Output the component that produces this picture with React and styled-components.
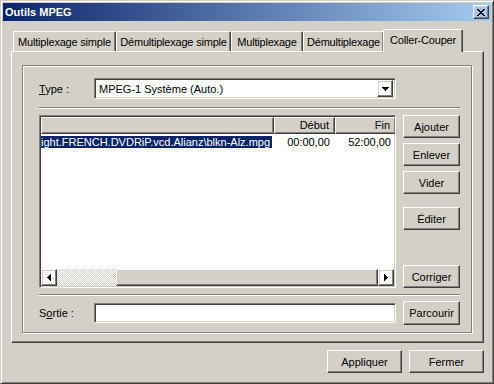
import React from 'react';
import styled, { createGlobalStyle, css } from 'styled-components';

const face = '#d4d0c8';

const Global = createGlobalStyle`
  html, body { margin: 0; padding: 0; background: ${face}; }
  body { font-family: "Liberation Sans", Arial, sans-serif; font-size: 11px; color: #000; }
  * { box-sizing: border-box; }
`;

const raised = css`
  border: 1px solid;
  border-color: #fff #404040 #404040 #fff;
  box-shadow: inset -1px -1px #808080, inset 1px 1px ${face};
`;

const sunken = css`
  border: 1px solid;
  border-color: #808080 #fff #fff #808080;
  box-shadow: inset 1px 1px #404040, inset -1px -1px ${face};
`;

const Window = styled.div`
  width: 494px;
  height: 384px;
  background: ${face};
  border: 1px solid;
  border-color: ${face} #404040 #404040 ${face};
  box-shadow: inset 1px 1px #fff, inset -1px -1px #808080;
  padding: 2px;
  display: flex;
  flex-direction: column;
`;

const TitleBar = styled.div`
  height: 18px;
  background: linear-gradient(to right, #0a246a, #a6caf0);
  display: flex;
  align-items: center;
  padding: 0 2px 0 2px;
  color: #fff;
  font-weight: bold;
  font-size: 11px;
`;

const CloseBtn = styled.div`
  ${raised};
  width: 16px;
  height: 14px;
  margin-left: auto;
  display: flex;
  align-items: center;
  justify-content: center;
`;

const Body = styled.div`
  padding: 8px 7px 0 8px;
  display: flex;
  flex-direction: column;
`;

const TabRow = styled.div`
  display: flex;
  align-items: flex-end;
  height: 22px;
  padding-left: 2px;
`;

const Tab = styled.div`
  width: ${p => p.$w + (p.$active ? 4 : 0)}px;
  height: ${p => (p.$active ? 23 : 20)}px;
  padding-bottom: ${p => (p.$active ? 2 : 0)}px;
  margin: ${p => (p.$active ? '0 -2px -1px -1px' : '0')};
  position: ${p => (p.$active ? 'relative' : 'static')};
  z-index: ${p => (p.$active ? 2 : 0)};
  background: ${face};
  border-left: 1px solid #fff;
  border-top: 1px solid #fff;
  border-right: 1px solid #404040;
  border-radius: 2px 2px 0 0;
  box-shadow: inset -1px 0 #808080;
  display: flex;
  align-items: center;
  justify-content: center;
  white-space: nowrap;
  letter-spacing: -0.2px;
  flex-shrink: 0;
`;

const Panel = styled.div`
  height: 292px;
  ${raised};
  padding: 13px 11px 9px 10px;
  display: flex;
`;

const Frame = styled.div`
  flex: 1;
  border: 1px solid #808080;
  box-shadow: inset 1px 1px #fff, 1px 1px #fff;
  padding: 12px 11px 0 16px;
  display: flex;
  flex-direction: column;
`;

const FieldRow = styled.div`
  display: flex;
  align-items: center;
  height: ${p => p.$h || 21}px;
  margin-top: ${p => p.$mt || 0}px;
`;

const Label = styled.div`
  width: 55px;
`;

const Combo = styled.div`
  ${sunken};
  width: 302px;
  height: 21px;
  background: #fff;
  display: flex;
  align-items: center;
  padding: 2px 2px 2px 4px;
`;

const ComboText = styled.div`
  flex: 1;
`;

const DropBtn = styled.div`
  ${raised};
  width: 16px;
  height: 17px;
  display: flex;
  align-items: center;
  justify-content: center;
`;

const Sep = styled.div`
  height: 2px;
  border-top: 1px solid #808080;
  border-bottom: 1px solid #fff;
  margin-top: ${p => p.$mt}px;
`;

const Main = styled.div`
  display: flex;
  height: 173px;
  margin-top: 6px;
`;

const ListBox = styled.div`
  ${sunken};
  width: 357px;
  background: #fff;
  display: flex;
  flex-direction: column;
  overflow: hidden;
  padding: 1px;
`;

const Header = styled.div`
  display: flex;
  height: 17px;
  flex-shrink: 0;
`;

const HeadCell = styled.div`
  width: ${p => p.$w}px;
  flex-shrink: 0;
  background: ${face};
  border: 1px solid;
  border-color: #fff #404040 #404040 #fff;
  box-shadow: inset -1px -1px #808080;
  text-align: right;
  padding: 1px 5px 0 0;
  line-height: 13px;
`;

const Rows = styled.div`
  flex: 1;
  padding-top: 1px;
`;

const Row = styled.div`
  display: flex;
  height: 14px;
  line-height: 14px;
`;

const Cell = styled.div`
  width: ${p => p.$w}px;
  flex-shrink: 0;
  text-align: ${p => (p.$right ? 'right' : 'left')};
  padding-right: ${p => (p.$right ? 5 : 0)}px;
  white-space: nowrap;
  overflow: hidden;
`;

const Selected = styled.span`
  background: #0a246a;
  color: #fff;
  padding-right: 2px;
`;

const HScroll = styled.div`
  display: flex;
  height: 17px;
  flex-shrink: 0;
`;

const ScrollBtn = styled.div`
  ${raised};
  width: 16px;
  display: flex;
  align-items: center;
  justify-content: center;
`;

const Track = styled.div`
  width: ${p => p.$w}px;
  background: repeating-conic-gradient(${face} 0% 25%, #fff 0% 50%) 0 0 / 2px 2px;
`;

const Thumb = styled.div`
  ${raised};
  flex: 1;
  background: ${face};
`;

const SideCol = styled.div`
  display: flex;
  flex-direction: column;
  width: 57px;
  margin-left: 7px;
`;

const Button = styled.div`
  ${raised};
  background: ${face};
  width: ${p => p.$w || 57}px;
  height: ${p => p.$h || 23}px;
  margin-top: ${p => (p.$auto ? 'auto' : `${p.$mt || 0}px`)};
  margin-left: ${p => p.$ml || 0}px;
  display: flex;
  align-items: center;
  justify-content: center;
  flex-shrink: 0;
`;

const Input = styled.div`
  ${sunken};
  width: 302px;
  height: 20px;
  background: #fff;
`;

const Footer = styled.div`
  display: flex;
  justify-content: flex-end;
  gap: 7px;
  margin-top: 7px;
`;

const Arrow = ({ dir }) => {
  const pts = {
    down: '0,0 7,0 7,1 6,1 6,2 5,2 5,3 4,3 4,4 3,4 3,3 2,3 2,2 1,2 1,1 0,1',
    left: '4,0 4,7 3,7 3,6 2,6 2,5 1,5 1,4 0,4 0,3 1,3 1,2 2,2 2,1 3,1 3,0',
    right: '0,0 0,7 1,7 1,6 2,6 2,5 3,5 3,4 4,4 4,3 3,3 3,2 2,2 2,1 1,1 1,0',
  }[dir];
  const w = dir === 'down' ? 7 : 4;
  const h = dir === 'down' ? 4 : 7;
  return (
    <svg width={w} height={h} shapeRendering="crispEdges">
      <polygon points={pts} fill="#000" />
    </svg>
  );
};

const CloseGlyph = () => {
  const rows = ['XX....XX', '.XX..XX.', '..XXXX..', '...XX...', '..XXXX..', '.XX..XX.', 'XX....XX'];
  return (
    <svg width="8" height="7" shapeRendering="crispEdges">
      {rows.map((r, y) =>
        r.split('').map((c, x) => (c === 'X' ? <rect key={`${x}-${y}`} x={x} y={y} width="1" height="1" fill="#000" /> : null))
      )}
    </svg>
  );
};

const tabs = [
  ['Multiplexage simple', 103],
  ['Démultiplexage simple', 115],
  ['Multiplexage', 72],
  ['Démultiplexage', 81],
  ['Coller-Couper', 76],
];

export default function App() {
  return (
    <>
      <Global />
      <Window>
        <TitleBar>
          Outils MPEG
          <CloseBtn><CloseGlyph /></CloseBtn>
        </TitleBar>
        <Body>
          <TabRow>
            {tabs.map(([t, w], i) => (
              <Tab key={t} $w={w} $active={i === 4}>{t}</Tab>
            ))}
          </TabRow>
          <Panel>
            <Frame>
              <FieldRow>
                <Label><u>T</u>ype :</Label>
                <Combo>
                  <ComboText>MPEG-1 Système (Auto.)</ComboText>
                  <DropBtn><Arrow dir="down" /></DropBtn>
                </Combo>
              </FieldRow>
              <Sep $mt={8} />
              <Main>
                <ListBox>
                  <Header>
                    <HeadCell $w={233} />
                    <HeadCell $w={61}>Début</HeadCell>
                    <HeadCell $w={61}>Fin</HeadCell>
                  </Header>
                  <Rows>
                    <Row>
                      <Cell $w={233}><Selected>{'ight.FRENCH.DVDRiP.vcd.Alianz\\blkn-Alz.mpg'}</Selected></Cell>
                      <Cell $w={61} $right>00:00,00</Cell>
                      <Cell $w={61} $right>52:00,00</Cell>
                    </Row>
                  </Rows>
                  <HScroll>
                    <ScrollBtn><Arrow dir="left" /></ScrollBtn>
                    <Track $w={59} />
                    <Thumb />
                    <ScrollBtn><Arrow dir="right" /></ScrollBtn>
                  </HScroll>
                </ListBox>
                <SideCol>
                  <Button>Ajouter</Button>
                  <Button $mt={5}>Enlever</Button>
                  <Button $mt={5}>Vider</Button>
                  <Button $mt={13}>Éditer</Button>
                  <Button $auto>Corriger</Button>
                </SideCol>
              </Main>
              <Sep $mt={6} />
              <FieldRow $h={24} $mt={5}>
                <Label>S<u>o</u>rtie :</Label>
                <Input />
                <Button $ml={7} $h={24}>Parcourir</Button>
              </FieldRow>
            </Frame>
          </Panel>
          <Footer>
            <Button $w={75}>Appliquer</Button>
            <Button $w={75}>Fermer</Button>
          </Footer>
        </Body>
      </Window>
    </>
  );
}
